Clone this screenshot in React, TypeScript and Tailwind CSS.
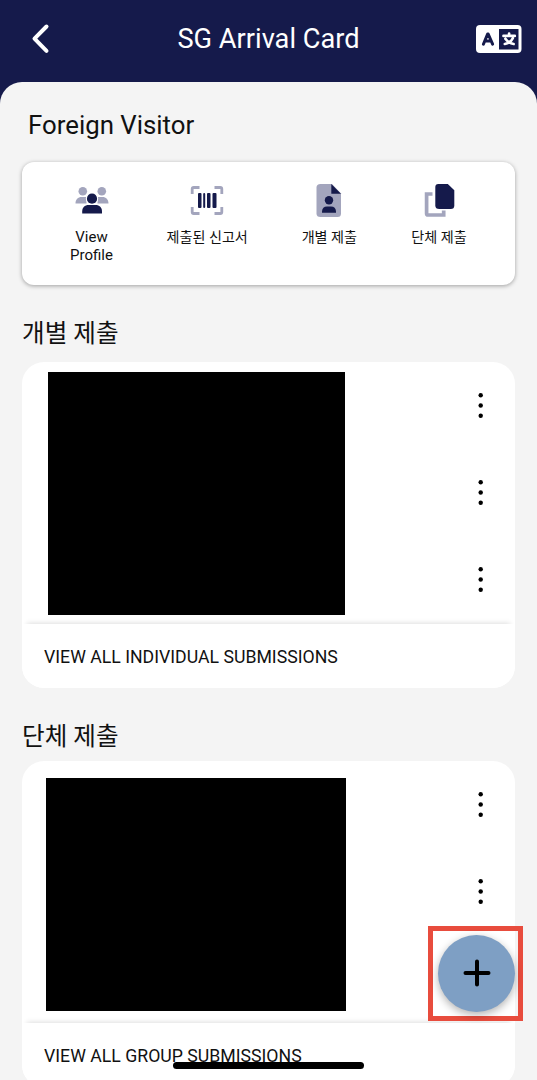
import { ReactNode } from 'react';

function BackIcon() {
  return (
    <svg width="20" height="32" viewBox="0 0 20 32" fill="none">
      <path d="M15.5 3.5 3.5 15.7 15.5 27.8" stroke="#fff" strokeWidth="4" strokeLinecap="round" strokeLinejoin="round" />
    </svg>
  );
}

function LanguageIcon() {
  return (
    <svg width="46" height="28" viewBox="0 0 46 28" fill="none">
      <rect width="45.500" height="28" rx="4" fill="#fff" />
      <rect x="23" y="4" width="19.500" height="20.500" fill="#151a4b" />
      <path d="M7.400 19.200 11.600 9h.6l4.400 10.200M9.500 16h5" stroke="#151a4b" strokeWidth="3" strokeLinecap="round" strokeLinejoin="round" />
      <path d="M27.500 10.900h11.300M33.100 8.500v1.500M29.400 13.800c2 2.800 5 4.900 8.200 5.200M36.800 13.200c-1.400 3.200-4.400 5.200-8 5.800" stroke="#fff" strokeWidth="2.700" strokeLinecap="round" />
    </svg>
  );
}

function PeopleIcon() {
  return (
    <svg width="34" height="34" viewBox="0 0 34 34">
      <g fill="#a3a5bd">
        <circle cx="7.800" cy="8.300" r="4.300" />
        <circle cx="26.800" cy="8.300" r="4.300" />
        <path d="M.500 20.500c0-4 2.500-6.500 6-6.500h5v6.500zM33.500 20.500c0-4-2.500-6.500-6-6.500h-5v6.500z" />
      </g>
      <circle cx="17" cy="15.700" r="6.200" fill="#fff" />
      <circle cx="17" cy="15.700" r="5.100" fill="#151a4b" />
      <path d="M7.200 30.500v-2c0-4 2.500-6.500 6.500-6.500h6.800c4 0 6.500 2.500 6.500 6.500v2z" fill="#151a4b" />
    </svg>
  );
}

function BarcodeIcon() {
  return (
    <svg width="34" height="34" viewBox="0 0 34 34" fill="none">
      <path d="M2.200 11V6q0-1.500 1.500-1.500H9.500M24.500 4.500h5.800q1.500 0 1.500 1.500v5M31.800 24v5q0 1.500-1.500 1.500h-5.800M9.500 30.500H3.700q-1.500 0-1.500-1.500v-5" stroke="#a3a5bd" strokeWidth="2.800" />
      <g fill="#151a4b">
        <rect x="8" y="10" width="3.500" height="15" rx="1" />
        <rect x="13.200" y="10" width="2" height="15" rx="1" />
        <rect x="17" y="10" width="3.500" height="15" rx="1" />
        <rect x="22.500" y="10" width="4" height="15" rx="1" />
      </g>
    </svg>
  );
}

function PersonFileIcon() {
  return (
    <svg width="34" height="34" viewBox="0 0 34 34">
      <path d="M8.500 1H20l9 9.500V30.500q0 3.500-3.500 3.500h-17Q4.500 34 4.500 30.500v-26Q4.500 1 8.500 1z" fill="#a3a5bd" />
      <path d="M19.300 1 29 10.800h-9.700z" fill="#151a4b" />
      <circle cx="17" cy="17.300" r="4.200" fill="#151a4b" />
      <path d="M10 29.700v-1c0-3.500 2-5.200 5-5.200h4c3 0 5 1.700 5 5.200v1z" fill="#151a4b" />
    </svg>
  );
}

function CopyIcon() {
  return (
    <svg width="34" height="34" viewBox="0 0 34 34" fill="none">
      <path d="M10.500 11H4.600v19.500q0 1.500 1.500 1.500h15.600v-4.500" stroke="#a3a5bd" strokeWidth="3.700" />
      <path d="M16.300 1h9.500l6.500 6.300V22.500q0 3.500-3.500 3.500h-11.500q-4 0-4-3.500V4q0-3 3-3z" fill="#151a4b" />
    </svg>
  );
}

function Action({ icon, label, className }: { icon: ReactNode; label: ReactNode; className: string }) {
  return (
    <button className={`flex flex-col items-center ${className}`}>
      {icon}
      <span className="mt-[11px] text-center leading-[18px] whitespace-nowrap">{label}</span>
    </button>
  );
}

function MoreButton() {
  return (
    <button className="flex h-[87px] items-center">
      <svg width="20" height="29" viewBox="0 0 20 29">
        <circle cx="9.7" cy="4.2" r="2.2" />
        <circle cx="9.7" cy="14.5" r="2.2" />
        <circle cx="9.7" cy="24.8" r="2.2" />
      </svg>
    </button>
  );
}

function SubmissionCard({ mask, footer }: { mask: string; footer: string }) {
  return (
    <div className="mx-[22px] h-[326px] shrink-0 overflow-hidden rounded-[22px] bg-white">
      <div className="flex h-[262px] items-start justify-between pr-[24px]">
        <div className={`bg-black ${mask}`} />
        <div className="flex flex-col">
          <MoreButton />
          <MoreButton />
          <MoreButton />
        </div>
      </div>
      <button className="relative block h-[64px] w-full bg-white px-[22px] pt-[2px] text-left text-[17.7px] shadow-[0_-6px_5px_-5px_rgba(0,0,0,0.13)]">
        {footer}
      </button>
    </div>
  );
}

export default function App() {
  return (
    <div className="relative flex h-[1080px] w-[537px] flex-col overflow-hidden bg-[#151a4b] font-[Roboto,'Noto_Sans_CJK_KR',sans-serif] text-[#111]">
      <header className="flex h-[82px] shrink-0 items-center justify-between pr-[15px] pb-[5px] pl-[31px] text-white">
        <button className="w-[30px]"><BackIcon /></button>
        <h1 className="pt-[2px] text-[27.2px]">SG Arrival Card</h1>
        <button><LanguageIcon /></button>
      </header>

      <main className="flex min-h-0 flex-1 flex-col overflow-hidden rounded-t-[22px] bg-[#f4f4f4]">
        <h2 className="mt-[25px] ml-[28px] text-[25.8px] leading-[36px]">Foreign Visitor</h2>
        <section className="mx-[22px] mt-[19px] flex h-[123px] shrink-0 items-start justify-between rounded-[12px] bg-white px-[48px] pt-[21px] shadow-[0_1px_4px_rgba(0,0,0,0.35)]">
          <Action className="w-[43px] text-[15px]" icon={<PeopleIcon />} label={<>View<br />Profile</>} />
          <Action className="w-[81px] text-[14.1px]" icon={<BarcodeIcon />} label="제출된 신고서" />
          <Action className="w-[56px] text-[14.1px]" icon={<PersonFileIcon />} label="개별 제출" />
          <Action className="w-[56px] text-[14.1px]" icon={<CopyIcon />} label="단체 제출" />
        </section>

        <h2 className="mt-[31px] mb-[10px] ml-[22px] text-[24.6px] leading-[36px]">개별 제출</h2>
        <SubmissionCard mask="mt-[10px] ml-[26px] h-[243px] w-[297px]" footer="VIEW ALL INDIVIDUAL SUBMISSIONS" />

        <h2 className="mt-[31px] mb-[6px] ml-[22px] text-[24.6px] leading-[36px]">단체 제출</h2>
        <SubmissionCard mask="mt-[17px] ml-[24px] h-[233px] w-[300px]" footer="VIEW ALL GROUP SUBMISSIONS" />
      </main>

      <div className="absolute top-[926px] left-[428px] flex h-[95px] w-[95px] items-center justify-center border-[5px] border-[#e84c3d] pb-[1px] pl-[2px]">
        <button className="flex size-[77px] shrink-0 items-center justify-center rounded-full bg-[#7e9fc4] shadow-[0_3px_9px_rgba(0,0,0,0.3)]">
          <svg width="28" height="28" viewBox="0 0 28 28">
            <path d="M14 2.500v23M2.500 14h23" stroke="#000" strokeWidth="4" strokeLinecap="round" />
          </svg>
        </button>
      </div>
      <div className="absolute top-[1062px] left-[173px] h-[7px] w-[191px] rounded-full bg-black" />
    </div>
  );
}
